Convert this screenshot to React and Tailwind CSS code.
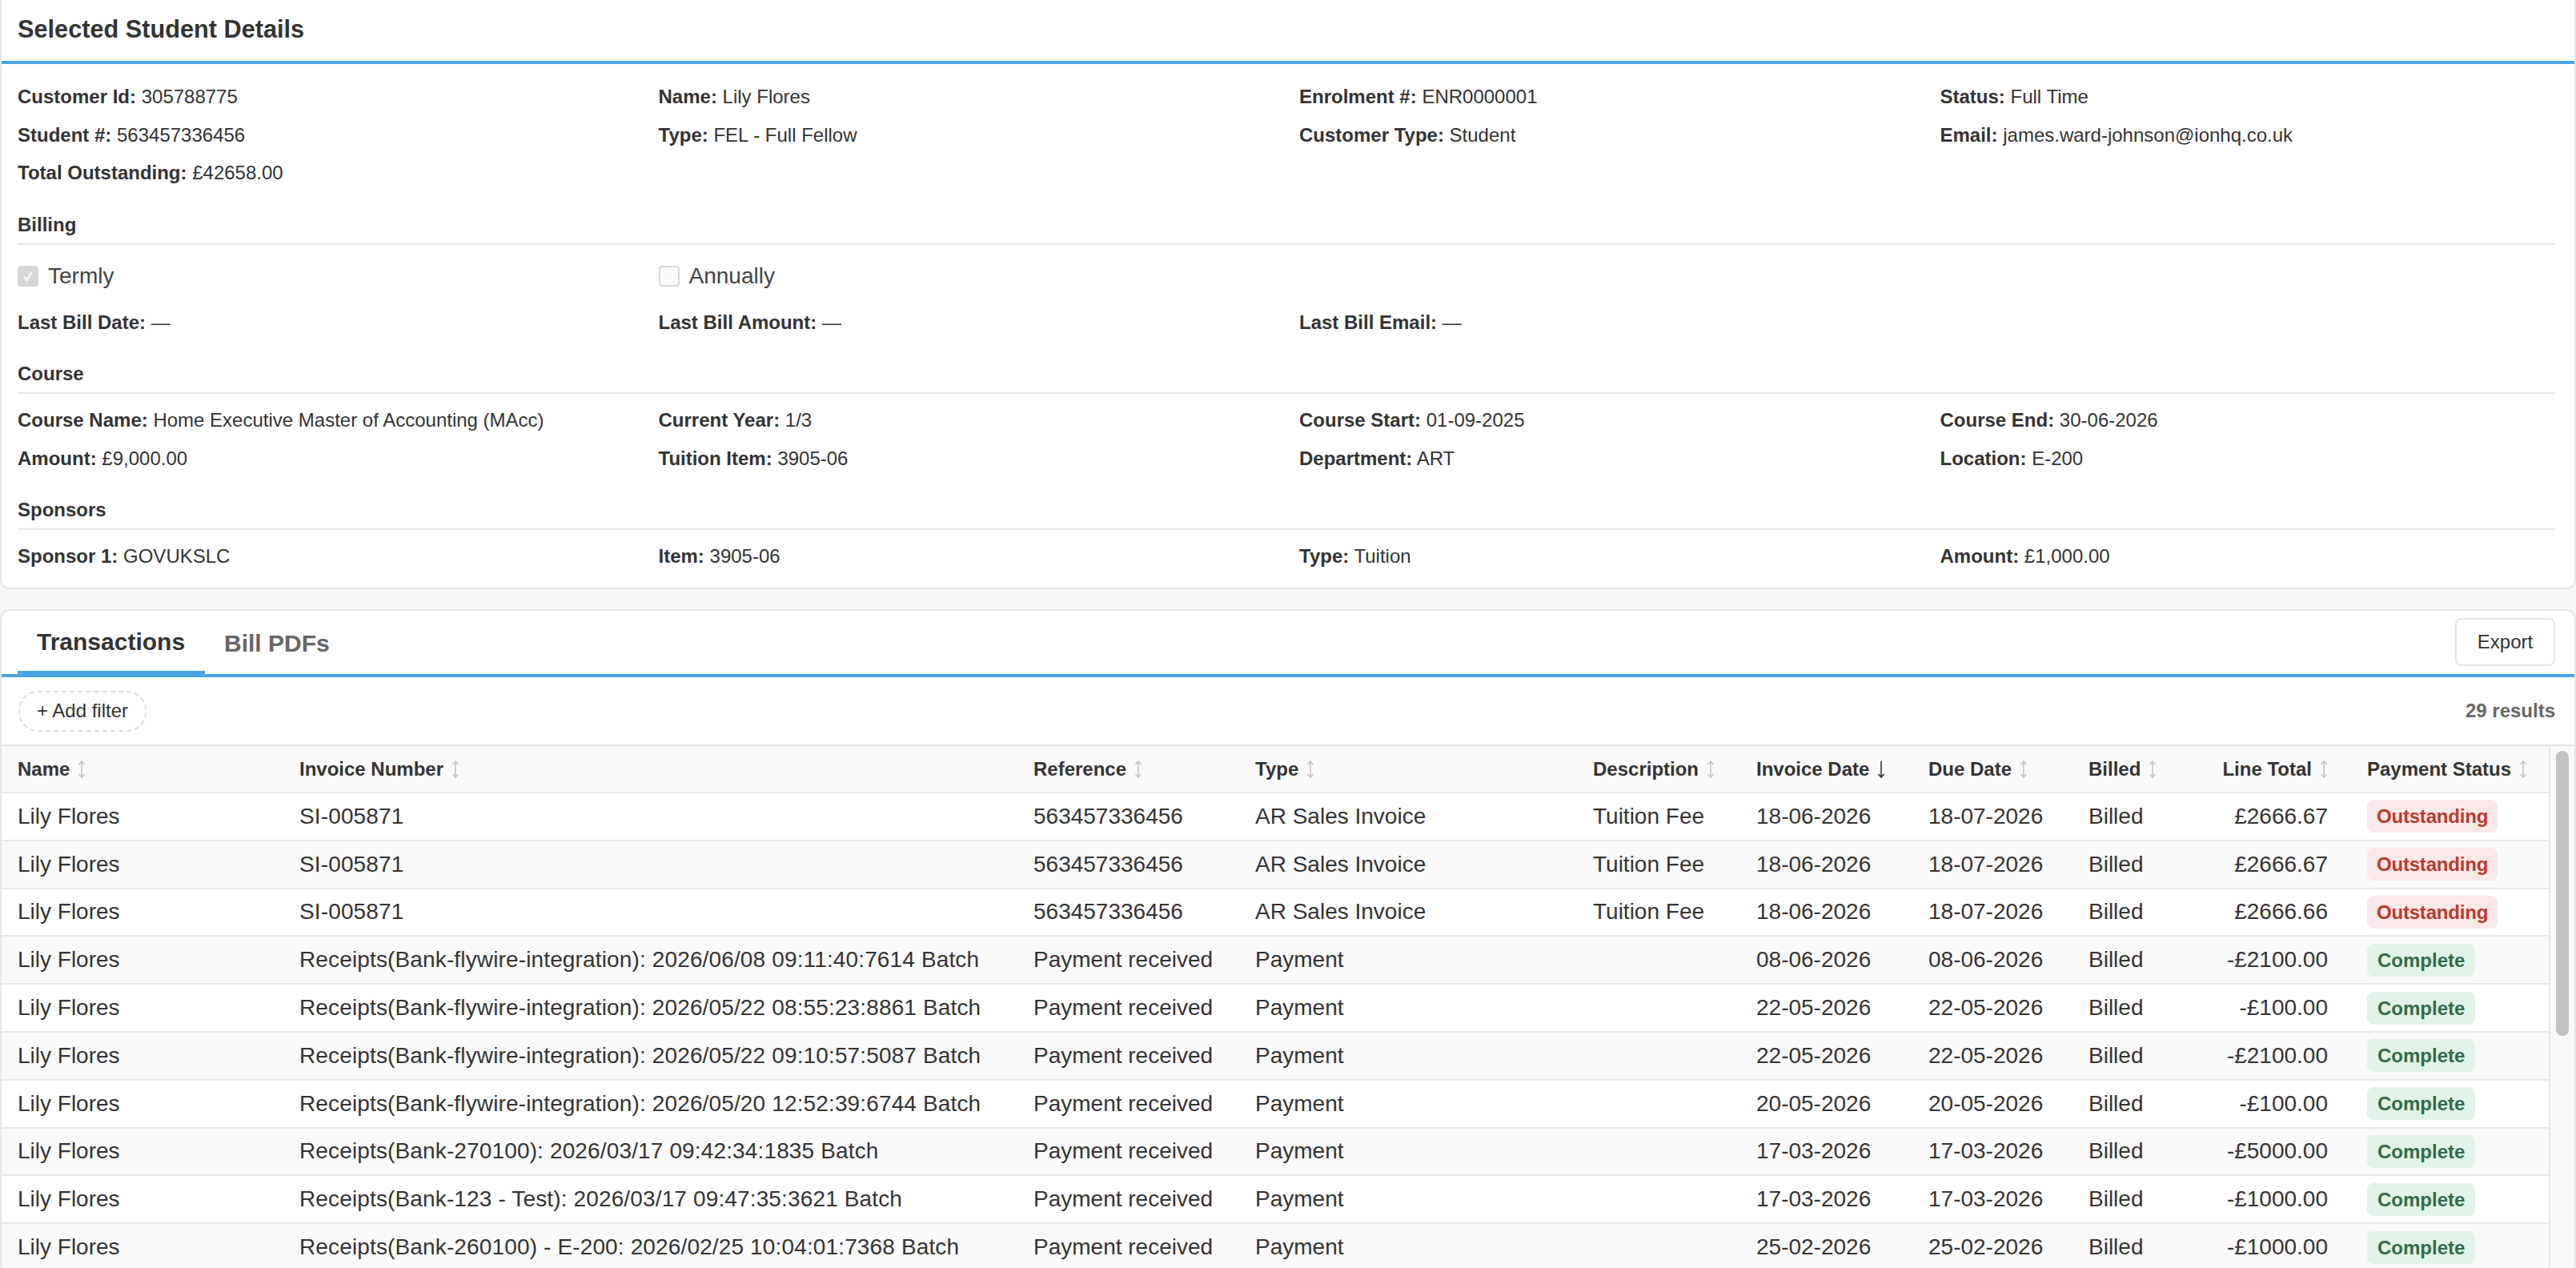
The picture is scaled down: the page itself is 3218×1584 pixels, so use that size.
const font = { fontFamily: '"Liberation Sans", Arial, sans-serif' };

const Field = ({ label, value }) => (
  <div className="leading-[36px] whitespace-nowrap">
    <span className="font-bold">{label}:</span> {value}
  </div>
);

const FieldGrid = ({ items }) => (
  <div className="grid grid-cols-4 gap-x-8 gap-y-[11.5px]">
    {items.map((f, i) =>
      f ? <Field key={i} label={f[0]} value={f[1]} /> : <div key={i} />
    )}
  </div>
);

const SectionTitle = ({ children, className }) => (
  <div
    className={`font-bold leading-[36px] border-b-2 border-[#e5e5e5] pb-[5px] ${className}`}
  >
    {children}
  </div>
);

const SortIcon = ({ active }) => (
  <svg
    width="10"
    height="22"
    viewBox="0 0 10 22"
    fill="none"
    stroke={active ? "#333333" : "#c4c4c4"}
    strokeWidth="1.6"
    className="shrink-0"
  >
    {active ? (
      <path d="M5 1V21M1.5 17L5 21L8.5 17" />
    ) : (
      <path d="M5 1V21M1.5 5L5 1L8.5 5M1.5 17L5 21L8.5 17" />
    )}
  </svg>
);

const columns = [
  ["Name"],
  ["Invoice Number"],
  ["Reference"],
  ["Type"],
  ["Description"],
  ["Invoice Date", true],
  ["Due Date"],
  ["Billed"],
  ["Line Total"],
  ["Payment Status"],
];

const invoice = (total) => [
  "SI-005871",
  "563457336456",
  "AR Sales Invoice",
  "Tuition Fee",
  "18-06-2026",
  "18-07-2026",
  total,
  "Outstanding",
];

const payment = (ref, date, total) => [
  ref,
  "Payment received",
  "Payment",
  "",
  date,
  date,
  total,
  "Complete",
];

const rows = [
  invoice("£2666.67"),
  invoice("£2666.67"),
  invoice("£2666.66"),
  payment("Receipts(Bank-flywire-integration): 2026/06/08 09:11:40:7614 Batch", "08-06-2026", "-£2100.00"),
  payment("Receipts(Bank-flywire-integration): 2026/05/22 08:55:23:8861 Batch", "22-05-2026", "-£100.00"),
  payment("Receipts(Bank-flywire-integration): 2026/05/22 09:10:57:5087 Batch", "22-05-2026", "-£2100.00"),
  payment("Receipts(Bank-flywire-integration): 2026/05/20 12:52:39:6744 Batch", "20-05-2026", "-£100.00"),
  payment("Receipts(Bank-270100): 2026/03/17 09:42:34:1835 Batch", "17-03-2026", "-£5000.00"),
  payment("Receipts(Bank-123 - Test): 2026/03/17 09:47:35:3621 Batch", "17-03-2026", "-£1000.00"),
  payment("Receipts(Bank-260100) - E-200: 2026/02/25 10:04:01:7368 Batch", "25-02-2026", "-£1000.00"),
];

const Badge = ({ status }) => (
  <span
    className={
      status === "Outstanding"
        ? "inline-block rounded-lg bg-[#fae8e8] text-[#b83a2e] font-bold text-[24px] tracking-[-0.2px] leading-[41px] px-[12px]"
        : "inline-block rounded-lg bg-[#e1f3e8] text-[#2f6b4a] font-bold text-[24px] leading-[41px] px-[13px]"
    }
  >
    {status}
  </span>
);

const TransactionsTable = () => (
  <table className="table-fixed border-collapse w-[3184px] text-[#333333]">
    <colgroup>
      <col className="w-[352px]" />
      <col className="w-[917px]" />
      <col className="w-[277px]" />
      <col className="w-[422px]" />
      <col className="w-[204px]" />
      <col className="w-[215px]" />
      <col className="w-[200px]" />
      <col className="w-[148px]" />
      <col className="w-[200px]" />
      <col className="w-[249px]" />
    </colgroup>
    <thead>
      <tr className="bg-[#fafafa] border-b-2 border-[#e8e8e8] h-[58px]">
        {columns.map(([name, active]) => (
          <th
            key={name}
            className={
              name === "Line Total"
                ? "pr-[29px] text-[24px] font-bold"
                : "pl-[20px] text-[24px] font-bold"
            }
          >
            <div
              className={
                name === "Line Total"
                  ? "flex items-center justify-end gap-[10px] whitespace-nowrap"
                  : "flex items-center gap-[10px] whitespace-nowrap"
              }
            >
              {name}
              <SortIcon active={active} />
            </div>
          </th>
        ))}
      </tr>
    </thead>
    <tbody>
      {rows.map((r, i) => (
        <tr
          key={i}
          className={
            i % 2 === 1
              ? "bg-[#fafafa] border-b-2 border-[#e8e8e8] h-[59.8px]"
              : "bg-white border-b-2 border-[#e8e8e8] h-[59.8px]"
          }
        >
          <td className="pl-[20px] text-[28px] whitespace-nowrap">Lily Flores</td>
          {r.slice(0, 6).map((c, j) => (
            <td
              key={j}
              className={
                j === 0
                  ? "pl-[20px] text-[28px] tracking-[0.14px] whitespace-nowrap"
                  : "pl-[20px] text-[28px] whitespace-nowrap"
              }
            >
              {c}
            </td>
          ))}
          <td className="pl-[20px] text-[28px] whitespace-nowrap">Billed</td>
          <td className="pr-[29px] text-[28px] text-right whitespace-nowrap">{r[6]}</td>
          <td className="pl-[20px] whitespace-nowrap">
            <Badge status={r[7]} />
          </td>
        </tr>
      ))}
    </tbody>
  </table>
);

const App = () => {
  return (
    <div
      className="h-[1584px] w-[3218px] overflow-hidden bg-[#f5f6f8] flex flex-col text-[24px] text-[#333333]"
      style={font}
    >
      {/* Student details */}
      <div className="bg-white border-b-2 border-x-2 border-[#e5e5e5] rounded-b-xl h-[736px] shrink-0">
        <div className="h-[80px] border-b-4 border-[#4aa5e6] px-[20px] flex items-center pb-[2px]">
          <h2 className="text-[30.7px] font-bold">Selected Student Details</h2>
        </div>
        <div className="px-[20px] pr-[24px] pt-[23px]">
          <FieldGrid
            items={[
              ["Customer Id", "305788775"],
              ["Name", "Lily Flores"],
              ["Enrolment #", "ENR0000001"],
              ["Status", "Full Time"],
              ["Student #", "563457336456"],
              ["Type", "FEL - Full Fellow"],
              ["Customer Type", "Student"],
              ["Email", "james.ward-johnson@ionhq.co.uk"],
              ["Total Outstanding", "£42658.00"],
            ]}
          />

          <SectionTitle className="mt-[29px]">Billing</SectionTitle>
          <div className="grid grid-cols-4 gap-x-8 mt-[18px] h-[36px] text-[28px] text-[#444444]">
            <label className="flex items-center gap-3">
              <span className="w-[26px] h-[26px] rounded bg-[#d6d6d6] flex items-center justify-center">
                <svg width="16" height="16" viewBox="0 0 16 16" fill="none" stroke="#f4f4f4" strokeWidth="2.6">
                  <path d="M3 8.5L6.5 13L13 2.5" />
                </svg>
              </span>
              Termly
            </label>
            <label className="flex items-center gap-3">
              <span className="w-[26px] h-[26px] rounded bg-[#fafafa] border-2 border-[#d9d9d9]" />
              Annually
            </label>
          </div>
          <div className="mt-[25px]">
            <FieldGrid
              items={[
                ["Last Bill Date", "—"],
                ["Last Bill Amount", "—"],
                ["Last Bill Email", "—"],
              ]}
            />
          </div>

          <SectionTitle className="mt-[28px]">Course</SectionTitle>
          <div className="mt-[15px]">
            <FieldGrid
              items={[
                ["Course Name", "Home Executive Master of Accounting (MAcc)"],
                ["Current Year", "1/3"],
                ["Course Start", "01-09-2025"],
                ["Course End", "30-06-2026"],
                ["Amount", "£9,000.00"],
                ["Tuition Item", "3905-06"],
                ["Department", "ART"],
                ["Location", "E-200"],
              ]}
            />
          </div>

          <SectionTitle className="mt-[28px]">Sponsors</SectionTitle>
          <div className="mt-[15px]">
            <FieldGrid
              items={[
                ["Sponsor 1", "GOVUKSLC"],
                ["Item", "3905-06"],
                ["Type", "Tuition"],
                ["Amount", "£1,000.00"],
              ]}
            />
          </div>
        </div>
      </div>

      {/* Transactions */}
      <div className="mt-[25px] flex-1 min-h-0 bg-white border-t-2 border-x-2 border-[#e5e5e5] rounded-t-xl flex flex-col overflow-hidden">
        <div className="h-[83px] shrink-0 border-b-4 border-[#4aa5e6] flex items-end justify-between pl-[20px] pr-[24px]">
          <div className="flex h-[79px] text-[30px] font-bold">
            <div className="w-[234px] pl-[24px] pt-[2px] border-b-[6px] border-[#4aa5e6] -mb-[2px] flex items-center">
              Transactions
            </div>
            <div className="pl-[24px] pt-[2px] text-[#666666] flex items-center">Bill PDFs</div>
          </div>
          <button className="h-[60px] w-[125px] mb-[10px] border-2 border-[#e5e5e5] rounded-lg bg-white text-[24px]">
            Export
          </button>
        </div>
        <div className="h-[84px] shrink-0 flex items-center justify-between pl-[21px] pr-[24px]">
          <button className="h-[51px] w-[160px] border-2 border-dashed border-[#dddddd] rounded-[24px] text-[24px] bg-white">
            + Add filter
          </button>
          <span className="font-bold text-[#666666]">29 results</span>
        </div>
        <div className="flex-1 min-h-0 flex border-t-2 border-[#e5e5e5] overflow-hidden">
          <div className="w-[3184px] shrink-0 overflow-hidden border-r-2 border-[#e8e8e8]">
            <TransactionsTable />
          </div>
          <div className="flex-1 bg-[#fafafa] pt-[6px] flex justify-center">
            <div className="w-[16px] h-[356px] rounded-lg bg-[#c1c1c1]" />
          </div>
        </div>
      </div>
    </div>
  );
};

export default App;
